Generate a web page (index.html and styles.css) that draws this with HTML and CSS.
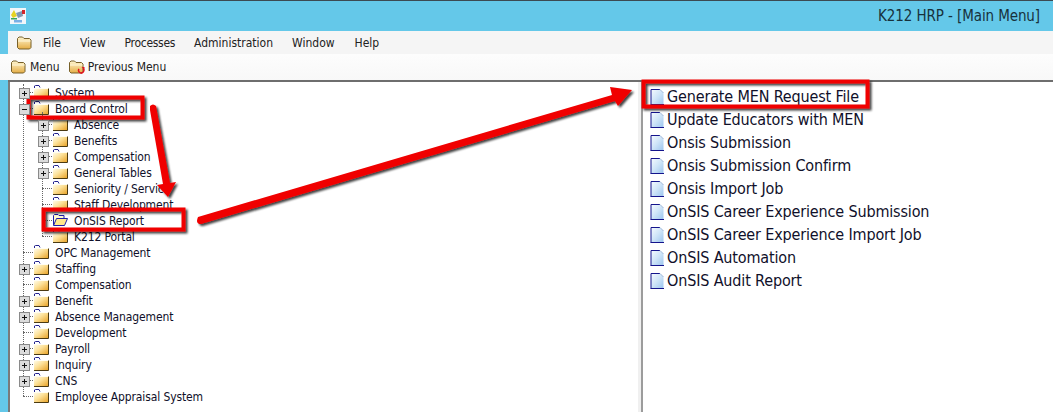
FILE: index.html
```html
<!DOCTYPE html>
<html lang="en">
<head>
<meta charset="utf-8">
<title>K212 HRP - [Main Menu]</title>
<link rel="stylesheet" href="styles.css">
</head>
<body>
<svg class="defs" width="0" height="0" aria-hidden="true">
  <defs>
    <linearGradient id="fg" x1="0" y1="0" x2="1" y2="1">
      <stop offset="0" stop-color="#fffef2"/><stop offset=".45" stop-color="#fde29a"/><stop offset="1" stop-color="#e8a42a"/>
    </linearGradient>
    <linearGradient id="pg" x1="0" y1="0" x2="1" y2="1">
      <stop offset="0" stop-color="#f6fbff"/><stop offset=".5" stop-color="#cfe5f8"/><stop offset="1" stop-color="#9ec6ee"/>
    </linearGradient>
    <linearGradient id="tb" x1="0" y1="0" x2="0" y2="1">
      <stop offset="0" stop-color="#fff6d0"/><stop offset="1" stop-color="#e5ad45"/>
    </linearGradient>
    <symbol id="folder" viewBox="0 0 16 14">
      <path d="M1.500 3V1L2.500 .5H6L7 2.500" fill="none" stroke="#23238e"/>
      <path d="M1 3H15V13H1Z" fill="url(#fg)"/>
      <path d="M1 3.500H15" stroke="#fffef2"/>
      <path d="M15.500 3.500V13.500H1" fill="none" stroke="#4a3a12"/>
    </symbol>
    <symbol id="folder-open" viewBox="0 0 16 14">
      <path d="M1.500 12V2.500L2.500 1.500H6L7 2.500H12V5.500" fill="#fffbd0" stroke="#1c1cab"/>
      <path d="M1.500 12.500L4.500 5.500H15.500L12.500 12.500Z" fill="#ffe88a" stroke="#1c1cab"/>
    </symbol>
    <symbol id="page" viewBox="0 0 14 16">
      <path d="M1 .5H10L13.500 4V15H1Z" fill="url(#pg)"/>
      <path d="M1 15.500V.5H10" fill="none" stroke="#14148c"/>
      <path d="M10 .5L13.500 4" fill="none" stroke="#9fb7d8"/>
      <path d="M.5 15.500H14" fill="none" stroke="#14148c"/>
    </symbol>
    <symbol id="tbfolder" viewBox="0 0 16 14">
      <path d="M1.500 11.500V2.500L3 1H6.500L8 2.500H13.500L15 4V11.500L13.500 13H3Z" fill="url(#tb)" stroke="#77602a"/>
      <path d="M2 5H14.500" stroke="#fff8dc"/>
    </symbol>
  </defs>
</svg>
<div class="window">
  <header class="titlebar">
    <svg class="appicon" viewBox="0 0 16 16" width="16" height="16" aria-hidden="true">
      <rect width="16" height="16" fill="#f3f6fa"/>
      <path d="M1 7 4 2 7 8 3 10Z" fill="#e7d322"/>
      <path d="M6 5 12 3 13 8 8 10Z" fill="#8098b3"/>
      <path d="M12 2h3v4h-3Z" fill="#d4242a"/>
      <path d="M1 10h6v1.500H1Z" fill="#3aa55a"/>
      <path d="M4 12h8v2.500H4Z" fill="#7ab0e6"/>
    </svg>
    <span class="apptitle">K212 HRP - [Main Menu]</span>
  </header>
  <nav class="menubar">
    <svg class="menuicon" aria-hidden="true"><use href="#tbfolder"/></svg>
    <span class="mi m-file">File</span>
    <span class="mi m-view">View</span>
    <span class="mi m-proc">Processes</span>
    <span class="mi m-admin">Administration</span>
    <span class="mi m-win">Window</span>
    <span class="mi">Help</span>
  </nav>
  <div class="toolbar">
    <span class="tool">
      <svg class="toolicon" aria-hidden="true"><use href="#tbfolder"/></svg>Menu
    </span>
    <span class="tool">
      <span class="prev">
        <svg class="toolicon" aria-hidden="true"><use href="#tbfolder"/></svg>
        <svg class="undo" viewBox="0 0 8 8" aria-hidden="true"><path d="M6 1.500A2.600 2.600 0 1 1 2 2" fill="none" stroke="#e0141c" stroke-width="1.500"/><path d="M4.500 0H7.500V3Z" fill="#e0141c"/></svg>
      </span>Previous Menu
    </span>
  </div>
  <main class="panes">
    <section class="left">
      <ul class="tree root">
        <li class="row"><span class="tw plus"></span><svg class="fld"><use href="#folder"/></svg><span class="lb">System</span></li>
        <li class="row"><span class="tw minus"></span><svg class="fld"><use href="#folder"/></svg><span class="lb">Board Control</span></li>
        <li>
          <ul class="tree sub">
            <li class="row"><span class="tw plus"></span><svg class="fld"><use href="#folder"/></svg><span class="lb">Absence</span></li>
            <li class="row"><span class="tw plus"></span><svg class="fld"><use href="#folder"/></svg><span class="lb">Benefits</span></li>
            <li class="row"><span class="tw plus"></span><svg class="fld"><use href="#folder"/></svg><span class="lb">Compensation</span></li>
            <li class="row"><span class="tw plus"></span><svg class="fld"><use href="#folder"/></svg><span class="lb">General Tables</span></li>
            <li class="row"><span class="tw"></span><svg class="fld"><use href="#folder"/></svg><span class="lb">Seniority / Service</span></li>
            <li class="row"><span class="tw"></span><svg class="fld"><use href="#folder"/></svg><span class="lb">Staff Development</span></li>
            <li class="row"><span class="tw"></span><svg class="fld"><use href="#folder-open"/></svg><span class="lb">OnSIS Report</span></li>
            <li class="row"><span class="tw"></span><svg class="fld"><use href="#folder"/></svg><span class="lb">K212 Portal</span></li>
          </ul>
        </li>
        <li class="row"><span class="tw"></span><svg class="fld"><use href="#folder"/></svg><span class="lb">OPC Management</span></li>
        <li class="row"><span class="tw plus"></span><svg class="fld"><use href="#folder"/></svg><span class="lb">Staffing</span></li>
        <li class="row"><span class="tw"></span><svg class="fld"><use href="#folder"/></svg><span class="lb">Compensation</span></li>
        <li class="row"><span class="tw plus"></span><svg class="fld"><use href="#folder"/></svg><span class="lb">Benefit</span></li>
        <li class="row"><span class="tw plus"></span><svg class="fld"><use href="#folder"/></svg><span class="lb">Absence Management</span></li>
        <li class="row"><span class="tw"></span><svg class="fld"><use href="#folder"/></svg><span class="lb">Development</span></li>
        <li class="row"><span class="tw plus"></span><svg class="fld"><use href="#folder"/></svg><span class="lb">Payroll</span></li>
        <li class="row"><span class="tw plus"></span><svg class="fld"><use href="#folder"/></svg><span class="lb">Inquiry</span></li>
        <li class="row"><span class="tw plus"></span><svg class="fld"><use href="#folder"/></svg><span class="lb">CNS</span></li>
        <li class="row"><span class="tw"></span><svg class="fld"><use href="#folder"/></svg><span class="lb">Employee Appraisal System</span></li>
      </ul>
    </section>
    <div class="splitter"></div>
    <section class="right">
      <ul class="list">
        <li class="item"><svg class="pg"><use href="#page"/></svg>Generate MEN Request File</li>
        <li class="item"><svg class="pg"><use href="#page"/></svg>Update Educators with MEN</li>
        <li class="item"><svg class="pg"><use href="#page"/></svg>Onsis Submission</li>
        <li class="item"><svg class="pg"><use href="#page"/></svg>Onsis Submission Confirm</li>
        <li class="item"><svg class="pg"><use href="#page"/></svg>Onsis Import Job</li>
        <li class="item"><svg class="pg"><use href="#page"/></svg>OnSIS Career Experience Submission</li>
        <li class="item"><svg class="pg"><use href="#page"/></svg>OnSIS Career Experience Import Job</li>
        <li class="item"><svg class="pg"><use href="#page"/></svg>OnSIS Automation</li>
        <li class="item"><svg class="pg"><use href="#page"/></svg>OnSIS Audit Report</li>
      </ul>
    </section>
  </main>
</div>
<svg class="annot" viewBox="0 0 1053 412" width="1053" height="412" aria-hidden="true">
  <defs>
    <filter id="sh" x="-20%" y="-20%" width="140%" height="140%">
      <feGaussianBlur in="SourceAlpha" stdDeviation="1"/>
      <feOffset dx="2" dy="2"/>
      <feComponentTransfer><feFuncA type="linear" slope=".75"/></feComponentTransfer>
      <feMerge><feMergeNode/><feMergeNode in="SourceGraphic"/></feMerge>
    </filter>
  </defs>
  <g filter="url(#sh)" fill="#f00000" stroke="none">
    <rect class="hl" x="28.500" y="97.500" width="114" height="20"/>
    <rect class="hl" x="43.500" y="209.500" width="140" height="20"/>
    <rect class="hl" x="643.500" y="81.500" width="224" height="25"/>
    <path d="M150 106 Q153 103 156 106 L170 183 L176 182 L168 197 L157 185 L163 184 L150 110Z"/>
    <path d="M198 217 L612 95 L610 87 L632 90 L618 106 L615 101 L201 224 Q195 224 198 217Z"/>
  </g>
</svg>
</body>
</html>
```
FILE: styles.css
```css
* { box-sizing: border-box; }
html, body { margin: 0; padding: 0; }
body {
  width: 1053px;
  height: 412px;
  overflow: hidden;
  position: relative;
  font-family: "DejaVu Sans", sans-serif;
  font-stretch: condensed;
  color: #10102a;
  background: #64c8e9;
}
.defs { position: absolute; }
ul { list-style: none; margin: 0; padding: 0; }
.window { display: flex; flex-direction: column; height: 412px; padding-left: 8px; }

.titlebar {
  height: 31px;
  margin-left: -8px;
  padding: 6px 13px 0 10px;
  border-top: 1px solid #3c4a52;
  display: flex;
  justify-content: space-between;
  align-items: flex-start;
  flex: none;
}
.appicon { flex: none; margin-top: 1px; }
.apptitle { font-size: 15px; line-height: 18px; letter-spacing: -.1px; color: #17313c; }

.menubar {
  height: 23px;
  flex: none;
  background: #f5f5f5;
  display: flex;
  align-items: center;
  padding-left: 8px;
  font-size: 12px;
  color: #222;
}
.menuicon { width: 16px; height: 14px; margin-right: 11px; }
.mi { white-space: nowrap; }
.m-file { margin-right: 19px; }
.m-view { margin-right: 19px; }
.m-proc { margin-right: 19px; letter-spacing: -.3px; }
.m-admin { margin-right: 19px; }
.m-win { margin-right: 20px; }

.toolbar {
  height: 26px;
  flex: none;
  margin-left: -8px;
  background: linear-gradient(#fdfdfd, #f8f8f8);
  display: flex;
  align-items: center;
  gap: 8px;
  padding-left: 10px;
  font-size: 12px;
  color: #222;
}
.tool { display: flex; align-items: center; gap: 4px; white-space: nowrap; }
.toolicon { width: 16px; height: 14px; display: block; }
.prev { position: relative; display: block; }
.undo { position: absolute; left: 9px; top: 7px; width: 8px; height: 8px; }

.panes { flex: 1; display: flex; min-height: 0; border-top: 2px solid #6e6e6e; }
.left {
  width: 630px;
  flex: none;
  background: #fff;
  border-left: 2px solid #7a7a7a;
  padding: 2px 0 0 4px;
  overflow: hidden;
}
.splitter {
  width: 5px;
  flex: none;
  background: #f0f0f0;
  border-right: 2px solid #9c9c9c;
}
.right { flex: 1; background: #fff; padding: 3px 0 0 7px; }

.tree { position: relative; }
.tree::before {
  content: "";
  position: absolute;
  left: 9px;
  top: 0;
  bottom: 8px;
  border-left: 1px dotted #666;
}
.tree.sub { padding-left: 19px; }
.tree.sub::before { left: 28px; top: -4px; }
.row {
  position: relative;
  height: 16px;
  display: flex;
  align-items: center;
  font-size: 12px;
  line-height: 16px;
  letter-spacing: -.12px;
  white-space: nowrap;
}
.tw {
  position: relative;
  width: 19px;
  height: 16px;
  flex: none;
}
.tw::after {
  content: "";
  position: absolute;
  left: 9px;
  right: 0;
  top: 8px;
  border-top: 1px dotted #666;
}
.plus::before, .minus::before {
  content: "";
  position: absolute;
  z-index: 1;
  left: 5px;
  top: 4px;
  width: 9px;
  height: 9px;
  border: 1px solid #8a8a8a;
  background:
    linear-gradient(#111, #111) center / 5px 1px no-repeat,
    #dcdcdc;
}
.plus::before {
  background:
    linear-gradient(#111, #111) center / 5px 1px no-repeat,
    linear-gradient(#111, #111) center / 1px 5px no-repeat,
    #dcdcdc;
}
.fld { width: 16px; height: 14px; flex: none; }
.lb { margin-left: 6px; padding-top: 2px; }

.item {
  height: 23px;
  display: flex;
  align-items: center;
  font-size: 16px;
  line-height: 23px;
  letter-spacing: -.15px;
  white-space: nowrap;
}
.pg { width: 14px; height: 16px; flex: none; margin-right: 3px; }

.annot { position: absolute; left: 0; top: 0; pointer-events: none; }
.hl { fill: none; stroke: #f00000; stroke-width: 4; }
```
